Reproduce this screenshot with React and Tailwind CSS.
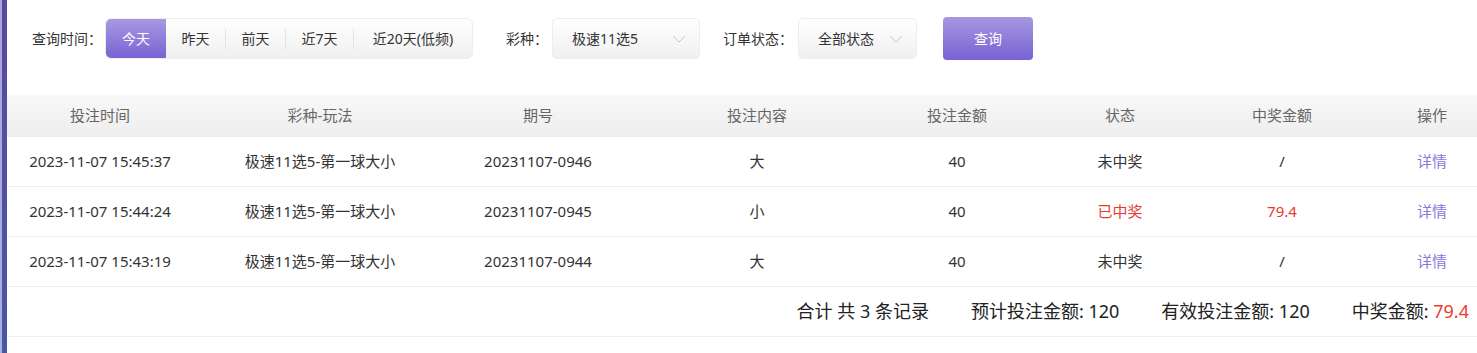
import React from "react";

const cols = "grid grid-cols-[186px_254px_182px_256px_144px_182px_142px_158px]";

const rows = [
  { time: "2023-11-07 15:45:37", game: "极速11选5-第一球大小", no: "20231107-0946", content: "大", amount: "40", status: "未中奖", win: "/", won: false },
  { time: "2023-11-07 15:44:24", game: "极速11选5-第一球大小", no: "20231107-0945", content: "小", amount: "40", status: "已中奖", win: "79.4", won: true },
  { time: "2023-11-07 15:43:19", game: "极速11选5-第一球大小", no: "20231107-0944", content: "大", amount: "40", status: "未中奖", win: "/", won: false },
];

const Chevron = () => (
  <svg width="14" height="8" viewBox="0 0 14 8" fill="none">
    <path d="M1 1 L7 7 L13 1" stroke="#c4c4c4" strokeWidth="1" />
  </svg>
);

const Sep = () => <div className="w-px h-[20px] bg-[#e3e3e3]" />;

export default function App() {
  const font = { fontFamily: '"Noto Sans", "Noto Sans CJK SC", sans-serif' };
  return (
    <div className="flex h-[353px] w-[1477px] bg-white overflow-hidden text-[#333]" style={font}>
      <div className="flex w-[7px] shrink-0">
        <div className="w-[2px] bg-gradient-to-b from-[#aba3dc] to-[#a7b1df]" />
        <div className="w-[5px] bg-gradient-to-b from-[#5a489d] to-[#4858a0]" />
      </div>
      <div className="flex-1 min-w-0 overflow-hidden flex flex-col">
        {/* filter row */}
        <div className="h-[95px] pl-[25px] pt-[17px]">
          <div className="flex items-center h-[43px] text-[14px]">
            <span className="mr-[3px]">查询时间：</span>
            <div className="flex items-center h-[41px] rounded-[6px] border border-[#ededed] bg-gradient-to-b from-white to-[#f0f0f0] overflow-hidden">
              <div className="w-[60px] h-full flex items-center justify-center text-white bg-gradient-to-b from-[#a899e1] to-[#7a62d3]">今天</div>
              <div className="w-[59px] h-full flex items-center justify-center">昨天</div>
              <Sep />
              <div className="w-[59px] h-full flex items-center justify-center">前天</div>
              <Sep />
              <div className="w-[67px] h-full flex items-center justify-center">近7天</div>
              <Sep />
              <div className="w-[118px] h-full flex items-center justify-center">近20天(低频)</div>
            </div>
            <span className="ml-[33px] mr-[4px]">彩种：</span>
            <div className="flex items-center justify-between w-[148px] h-[41px] pl-[19px] pr-[13px] rounded-[5px] border border-[#ededed] bg-gradient-to-b from-white to-[#f0f0f0]">
              <span>极速11选5</span>
              <Chevron />
            </div>
            <span className="ml-[23px] mr-[5px]">订单状态：</span>
            <div className="flex items-center justify-between w-[119px] h-[41px] pl-[19px] pr-[13px] rounded-[5px] border border-[#ededed] bg-gradient-to-b from-white to-[#f0f0f0]">
              <span>全部状态</span>
              <Chevron />
            </div>
            <button className="ml-[26px] w-[90px] h-[43px] rounded-[4px] text-white text-[14px] bg-gradient-to-b from-[#a697e1] to-[#7961d3]">查询</button>
          </div>
        </div>

        {/* table */}
        <div className={`${cols} h-[42px] items-center text-[15px] text-[#666] bg-gradient-to-b from-[#f8f8f8] to-[#eeeeee] border-b border-[#ebebeb]`}>
          {["投注时间", "彩种-玩法", "期号", "投注内容", "投注金额", "状态", "中奖金额", "操作"].map((h) => (
            <div key={h} className="text-center">{h}</div>
          ))}
        </div>
        {rows.map((r, i) => (
          <div key={i} className={`${cols} h-[50px] items-center text-[15px] text-[#333] border-b border-[#efefef]`}>
            <div className="text-center">{r.time}</div>
            <div className="text-center">{r.game}</div>
            <div className="text-center">{r.no}</div>
            <div className="text-center">{r.content}</div>
            <div className="text-center">{r.amount}</div>
            <div className={`text-center ${r.won ? "text-[#e8392f]" : ""}`}>{r.status}</div>
            <div className={`text-center ${r.won ? "text-[#e8392f]" : ""}`}>{r.win}</div>
            <div className="text-center text-[#8a78dc]">详情</div>
          </div>
        ))}
        <div className="flex items-center justify-end gap-[42px] h-[50px] pr-[8px] text-[18px] text-[#222] border-b border-[#efefef]">
          <span>合计 共 3 条记录</span>
          <span>预计投注金额: 120</span>
          <span>有效投注金额: 120</span>
          <span>
            中奖金额: <span className="text-[#f0392e]">79.4</span>
          </span>
        </div>
      </div>
    </div>
  );
}
